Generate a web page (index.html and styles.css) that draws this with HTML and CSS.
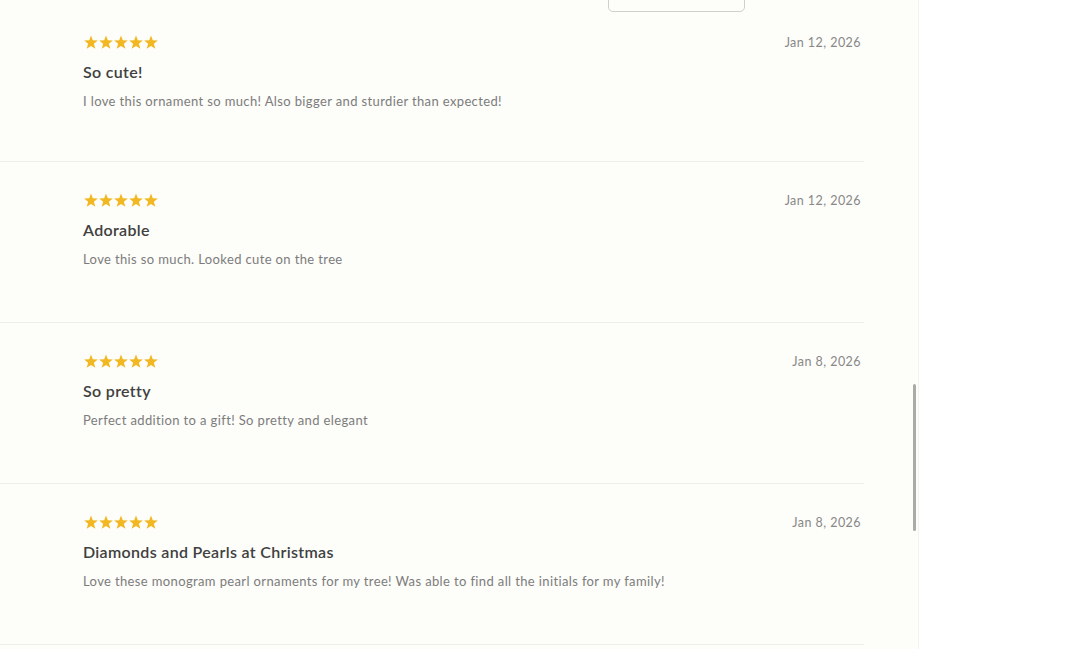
FILE: index.html
```html
<!DOCTYPE html>
<html lang="en">
<head>
<meta charset="utf-8">
<title>Reviews</title>
<link rel="stylesheet" href="styles.css">
</head>
<body>
<div class="page">
  <main class="main">
    <div class="toolbar">
      <div class="select"></div>
      <div class="sort">(Sort by Recency)</div>
    </div>
    <ul class="reviews">
      <li class="review review-first">
        <div class="review-head">
          <div class="stars">
            <svg viewBox="0 0 75 15" width="76" height="15"><g fill="#f2b823"><polygon points="7.5,0.5 9.3,5.3 14.3,5.5 10.4,8.7 11.8,13.7 7.5,10.9 3.2,13.7 4.6,8.7 0.7,5.5 5.7,5.3"/><polygon transform="translate(15 0)" points="7.5,0.5 9.3,5.3 14.3,5.5 10.4,8.7 11.8,13.7 7.5,10.9 3.2,13.7 4.6,8.7 0.7,5.5 5.7,5.3"/><polygon transform="translate(30 0)" points="7.5,0.5 9.3,5.3 14.3,5.5 10.4,8.7 11.8,13.7 7.5,10.9 3.2,13.7 4.6,8.7 0.7,5.5 5.7,5.3"/><polygon transform="translate(45 0)" points="7.5,0.5 9.3,5.3 14.3,5.5 10.4,8.7 11.8,13.7 7.5,10.9 3.2,13.7 4.6,8.7 0.7,5.5 5.7,5.3"/><polygon transform="translate(60 0)" points="7.5,0.5 9.3,5.3 14.3,5.5 10.4,8.7 11.8,13.7 7.5,10.9 3.2,13.7 4.6,8.7 0.7,5.5 5.7,5.3"/></g></svg>
          </div>
          <span class="date">Jan 12, 2026</span>
        </div>
        <h3 class="title">So cute!</h3>
        <p class="body">I love this ornament so much! Also bigger and sturdier than expected!</p>
      </li>
      <li class="review">
        <div class="review-head">
          <div class="stars">
            <svg viewBox="0 0 75 15" width="76" height="15"><g fill="#f2b823"><polygon points="7.5,0.5 9.3,5.3 14.3,5.5 10.4,8.7 11.8,13.7 7.5,10.9 3.2,13.7 4.6,8.7 0.7,5.5 5.7,5.3"/><polygon transform="translate(15 0)" points="7.5,0.5 9.3,5.3 14.3,5.5 10.4,8.7 11.8,13.7 7.5,10.9 3.2,13.7 4.6,8.7 0.7,5.5 5.7,5.3"/><polygon transform="translate(30 0)" points="7.5,0.5 9.3,5.3 14.3,5.5 10.4,8.7 11.8,13.7 7.5,10.9 3.2,13.7 4.6,8.7 0.7,5.5 5.7,5.3"/><polygon transform="translate(45 0)" points="7.5,0.5 9.3,5.3 14.3,5.5 10.4,8.7 11.8,13.7 7.5,10.9 3.2,13.7 4.6,8.7 0.7,5.5 5.7,5.3"/><polygon transform="translate(60 0)" points="7.5,0.5 9.3,5.3 14.3,5.5 10.4,8.7 11.8,13.7 7.5,10.9 3.2,13.7 4.6,8.7 0.7,5.5 5.7,5.3"/></g></svg>
          </div>
          <span class="date">Jan 12, 2026</span>
        </div>
        <h3 class="title">Adorable</h3>
        <p class="body">Love this so much. Looked cute on the tree</p>
      </li>
      <li class="review">
        <div class="review-head">
          <div class="stars">
            <svg viewBox="0 0 75 15" width="76" height="15"><g fill="#f2b823"><polygon points="7.5,0.5 9.3,5.3 14.3,5.5 10.4,8.7 11.8,13.7 7.5,10.9 3.2,13.7 4.6,8.7 0.7,5.5 5.7,5.3"/><polygon transform="translate(15 0)" points="7.5,0.5 9.3,5.3 14.3,5.5 10.4,8.7 11.8,13.7 7.5,10.9 3.2,13.7 4.6,8.7 0.7,5.5 5.7,5.3"/><polygon transform="translate(30 0)" points="7.5,0.5 9.3,5.3 14.3,5.5 10.4,8.7 11.8,13.7 7.5,10.9 3.2,13.7 4.6,8.7 0.7,5.5 5.7,5.3"/><polygon transform="translate(45 0)" points="7.5,0.5 9.3,5.3 14.3,5.5 10.4,8.7 11.8,13.7 7.5,10.9 3.2,13.7 4.6,8.7 0.7,5.5 5.7,5.3"/><polygon transform="translate(60 0)" points="7.5,0.5 9.3,5.3 14.3,5.5 10.4,8.7 11.8,13.7 7.5,10.9 3.2,13.7 4.6,8.7 0.7,5.5 5.7,5.3"/></g></svg>
          </div>
          <span class="date">Jan 8, 2026</span>
        </div>
        <h3 class="title">So pretty</h3>
        <p class="body">Perfect addition to a gift! So pretty and elegant</p>
      </li>
      <li class="review">
        <div class="review-head">
          <div class="stars">
            <svg viewBox="0 0 75 15" width="76" height="15"><g fill="#f2b823"><polygon points="7.5,0.5 9.3,5.3 14.3,5.5 10.4,8.7 11.8,13.7 7.5,10.9 3.2,13.7 4.6,8.7 0.7,5.5 5.7,5.3"/><polygon transform="translate(15 0)" points="7.5,0.5 9.3,5.3 14.3,5.5 10.4,8.7 11.8,13.7 7.5,10.9 3.2,13.7 4.6,8.7 0.7,5.5 5.7,5.3"/><polygon transform="translate(30 0)" points="7.5,0.5 9.3,5.3 14.3,5.5 10.4,8.7 11.8,13.7 7.5,10.9 3.2,13.7 4.6,8.7 0.7,5.5 5.7,5.3"/><polygon transform="translate(45 0)" points="7.5,0.5 9.3,5.3 14.3,5.5 10.4,8.7 11.8,13.7 7.5,10.9 3.2,13.7 4.6,8.7 0.7,5.5 5.7,5.3"/><polygon transform="translate(60 0)" points="7.5,0.5 9.3,5.3 14.3,5.5 10.4,8.7 11.8,13.7 7.5,10.9 3.2,13.7 4.6,8.7 0.7,5.5 5.7,5.3"/></g></svg>
          </div>
          <span class="date">Jan 8, 2026</span>
        </div>
        <h3 class="title">Diamonds and Pearls at Christmas</h3>
        <p class="body">Love these monogram pearl ornaments for my tree! Was able to find all the initials for my family!</p>
      </li>
    </ul>
    <div class="scroll-thumb"></div>
  </main>
  <aside class="side"></aside>
</div>
</body>
</html>
```

FILE: styles.css
```css
* { box-sizing: border-box; }
html, body {
  margin: 0;
  padding: 0;
  height: 100%;
  overflow: hidden;
}
body {
  font-family: Lato, "Open Sans", "Liberation Sans", sans-serif;
  background: #ffffff;
}
.page {
  display: flex;
  height: 649px;
}
.main {
  position: relative;
  width: 919px;
  flex: 0 0 919px;
  background: #fdfdf9;
  border-right: 1px solid #f3f3ee;
  overflow: hidden;
}
.side {
  flex: 1;
  background: #ffffff;
}
.toolbar {
  display: flex;
  align-items: flex-end;
  height: 42px;
  margin-top: -30px;
  padding-left: 608px;
}
.select {
  width: 137px;
  height: 40px;
  border: 1.5px solid #cfcfcb;
  border-radius: 5px;
  background: #fdfdf9;
}
.sort {
  margin-left: 36px;
  font-size: 13px;
  line-height: 16px;
  color: #666;
  align-self: flex-start;
  margin-top: 14px;
}
.reviews {
  list-style: none;
  margin: 0;
  padding: 0;
  width: 864px;
}
.review {
  height: 161px;
  padding: 31px 3px 0 83px;
  border-bottom: 1px solid #efefea;
}
.review-first {
  height: 150px;
  padding-top: 23px;
}
.review-head {
  display: flex;
  justify-content: space-between;
  align-items: center;
  height: 15px;
}
.stars {
  display: flex;
  height: 15px;
}
.stars svg { display: block; }
.date {
  font-size: 12.5px;
  color: #888888;
  letter-spacing: 0.45px;
}
.title {
  margin: 12px 0 0;
  font-size: 16px;
  line-height: 20px;
  font-weight: 600;
  color: #404040;
  letter-spacing: 0.32px;
}
.body {
  margin: 10px 0 0;
  font-size: 13px;
  line-height: 18px;
  color: #7c7c7c;
  letter-spacing: 0.37px;
}
.scroll-thumb {
  position: absolute;
  left: 913px;
  top: 384px;
  width: 3px;
  height: 147px;
  border-radius: 2px;
  background: #aaaaa8;
}
```
